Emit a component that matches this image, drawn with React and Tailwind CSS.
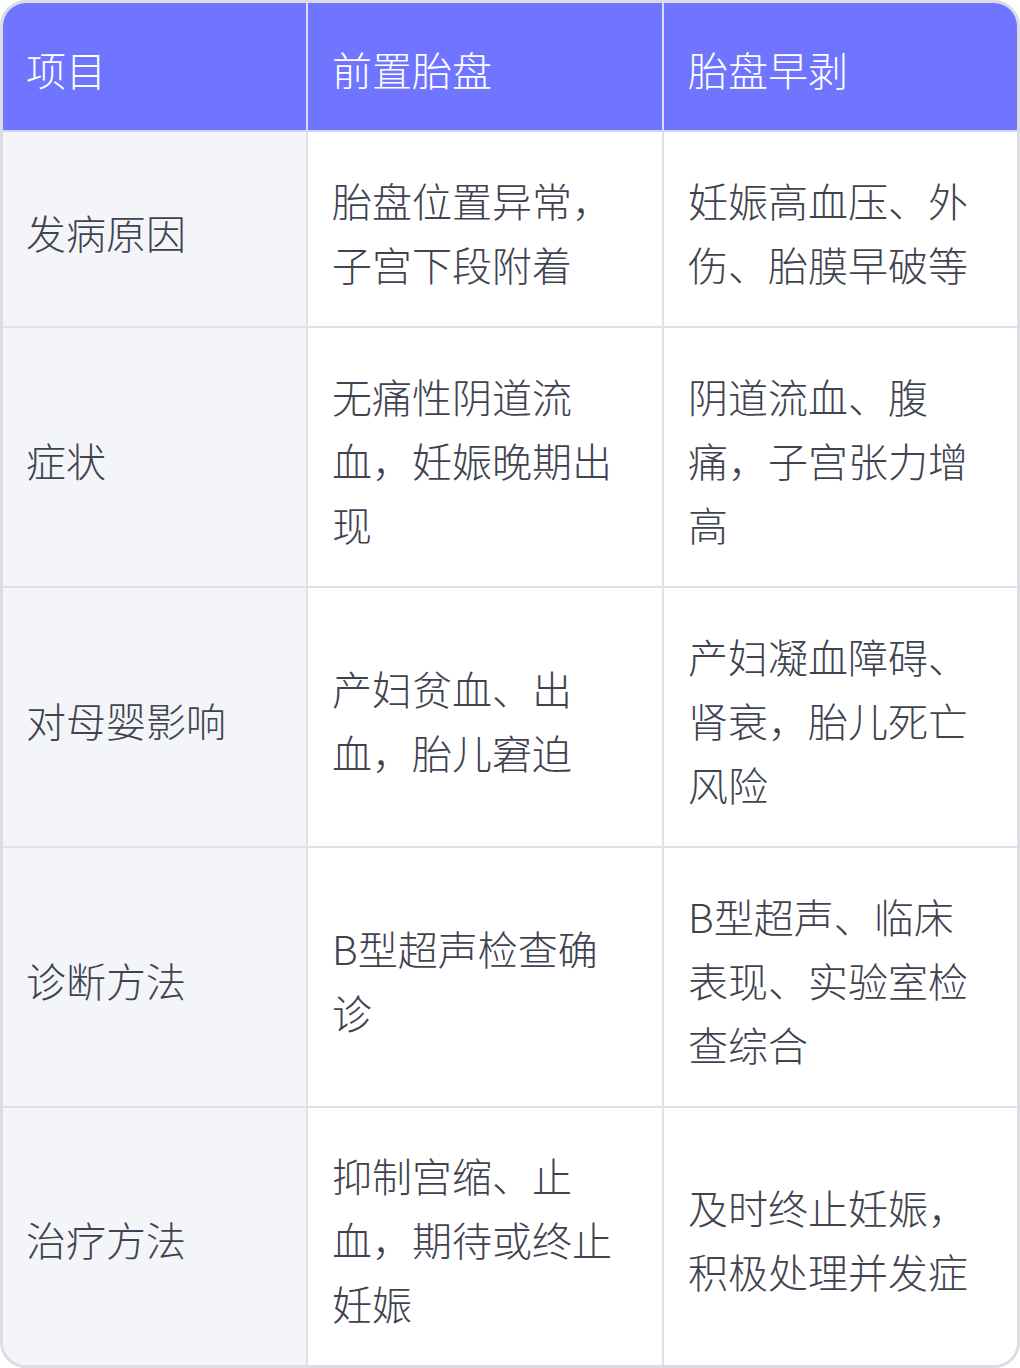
const rows = [
    ['发病原因', '胎盘位置异常，子宫下段附着', '妊娠高血压、外伤、胎膜早破等'],
    ['症状', '无痛性阴道流血，妊娠晚期出现', '阴道流血、腹痛，子宫张力增高'],
    ['对母婴影响', '产妇贫血、出血，胎儿窘迫', '产妇凝血障碍、肾衰，胎儿死亡风险'],
    ['诊断方法', 'B型超声检查确诊', 'B型超声、临床表现、实验室检查综合'],
    ['治疗方法', '抑制宫缩、止血，期待或终止妊娠', '及时终止妊娠，积极处理并发症'],
];

const font = { fontFamily: '"Noto Sans CJK SC", "Noto Sans", sans-serif' };

export default function App() {
    return (
        <div className="w-[1020px] h-[1368px] bg-white" style={font}>
            {/* 对比表 */}
            <div className="grid grid-cols-[305px_356px_1fr] grid-rows-[129px_196px_260px_260px_260px_257px] h-full border-[3px] border-[#dcdde2] rounded-[26px] overflow-hidden text-[40px] leading-[64px] font-light">
                {/* Header */}
                <div className="bg-[#7075ff] text-white flex items-center pl-[23px] pr-[26px] pt-[5px] border-r-2 border-b-2 border-r-[#d9daf2] border-b-[#d4d6f0]">项目</div>
                <div className="bg-[#7075ff] text-white flex items-center pl-[24px] pr-[26px] pt-[5px] border-r-2 border-b-2 border-r-[#d9daf2] border-b-[#d4d6f0]">前置胎盘</div>
                <div className="bg-[#7075ff] text-white flex items-center pl-[24px] pr-[26px] pt-[5px] border-b-2 border-b-[#d4d6f0]">胎盘早剥</div>

                {rows.map((r, i) => {
                    const last = i === rows.length - 1;
                    return (
                        <div key={i} className="contents">
                            <div className={`bg-[#f4f5f9] text-[#40434f] flex items-center pl-[23px] pr-[26px] pt-[5px] border-r-2 border-[#e0e1e5] ${last ? '' : 'border-b-2'}`}>
                                {r[0]}
                            </div>
                            <div className={`bg-white text-[#40434f] flex items-center pl-[24px] pr-[28px] pt-[5px] border-r-2 border-[#e0e1e5] ${last ? '' : 'border-b-2'}`}>
                                <p>{r[1]}</p>
                            </div>
                            <div className={`bg-white text-[#40434f] flex items-center pl-[24px] pr-[28px] pt-[5px] border-[#e0e1e5] ${last ? '' : 'border-b-2'}`}>
                                <p>{r[2]}</p>
                            </div>
                        </div>
                    );
                })}
            </div>
        </div>
    );
}
